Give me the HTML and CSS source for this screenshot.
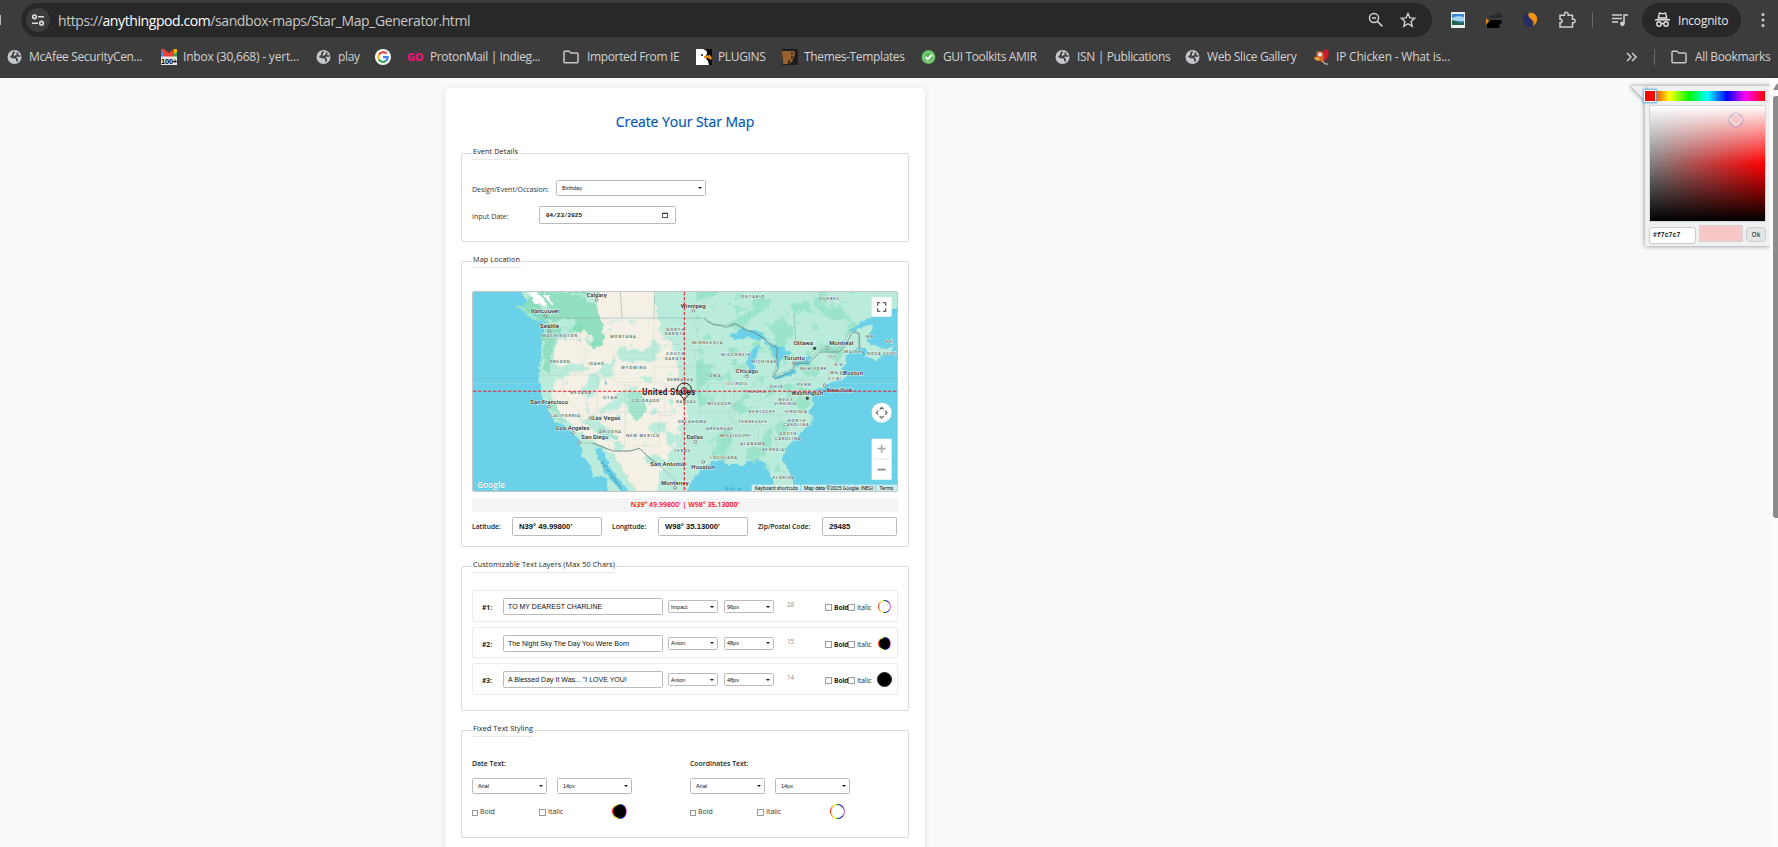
FILE: index.html
```html
<!DOCTYPE html>
<html lang="en">
<head>
<meta charset="utf-8">
<title>Create Your Star Map</title>
<link rel="stylesheet" href="styles.css">
</head>
<body>
<svg class="defs" width="0" height="0">
  <defs>
    <symbol id="globe" viewBox="0 0 16 16"><circle cx="7.500" cy="8" r="7" fill="#c3c6ca"/><path d="M7.500 2.500 6 4.500v2L3.500 8M5 8.500h3.500L10 10v2.500M10.500 3.500v2.500L9 7h4.500" fill="none" stroke="#3c3c3c" stroke-width="1.700"/></symbol>
    <symbol id="folder" viewBox="0 0 16 16"><path d="M1 3.200c0-.5.3-.9.900-.9h4.200L7.800 4h6.300c.5 0 .9.400.9.900v7.900c0 .5-.4.900-.9.900H1.900c-.5 0-.9-.4-.9-.9z" fill="none" stroke="#c7c7c7" stroke-width="1.500"/></symbol>
  </defs>
</svg>
<header class="chrome">
  <div class="toolbar">
    <span class="edge"></span>
    <div class="address">
      <span class="site"><svg width="14" height="14" viewBox="0 0 14 14" fill="none" stroke="#dedede" stroke-width="1.600"><circle cx="3.500" cy="3.800" r="1.800"/><path d="M7 3.800h6M1 10.200h6"/><circle cx="10.500" cy="10.200" r="1.800"/></svg></span>
      <span class="url">https://<b>anythingpod.com</b>/sandbox-maps/Star_Map_Generator.html</span>
      <svg class="lens" width="16" height="16" viewBox="0 0 16 16" fill="none" stroke="#cfcfcf" stroke-width="1.500"><circle cx="6" cy="6" r="4.500"/><path d="M4 6h4M9.400 9.400l5 5" /></svg>
      <svg class="star" width="16" height="16" viewBox="0 0 16 16" fill="none" stroke="#cfcfcf" stroke-width="1.400"><path d="m8 1.500 1.900 4.400 4.800.4-3.600 3.200 1.100 4.700L8 11.700l-4.200 2.500 1.100-4.700L1.300 6.300l4.800-.4z"/></svg>
    </div>
    <svg width="16" height="16" viewBox="0 0 16 16"><rect x="1" width="14" height="16" fill="#e8eef2"/><rect x="2" y="2" width="12" height="11" fill="#3a86d4"/><path d="M2 6c3-2 8-2 12-1v4H2z" fill="#a9d6ef"/><path d="M2 8l4 1 4 2 4-1v3H2z" fill="#1f6550"/></svg>
    <svg width="18" height="16" viewBox="0 0 18 16"><path d="M5 3q3 2 6-1t6 1v3H5z" fill="#2a2a2a"/><path d="M1 6l3 3-3 4z" fill="#e58b1a"/><path d="M6 8h10l1 3-2 1-1 4H2v-4z" fill="#000"/></svg>
    <svg width="16" height="16" viewBox="0 0 16 16"><path d="M6 1C1 2 0 7 2 11s7 5 9 3c-3-3 0-4-2-7S5 4 6 1z" fill="#222c62"/><path d="M7 1c5-1 9 3 8 7-.5 3-2 5-4 6 1-3 1-4-1-6S5 4 7 1z" fill="#f39313"/></svg>
    <svg width="18" height="18" viewBox="0 0 18 18"><path d="M2 4.300h4.500V3a1.800 1.800 0 0 1 3.600 0v1.300h4.400v4h1a1.700 1.700 0 0 1 0 3.400h-1V16H2v-4.200c2.800 0 2.800-3.600 0-3.600z" fill="none" stroke="#cfcfcf" stroke-width="1.500"/></svg>
    <i class="bar"></i>
    <svg width="16" height="14" viewBox="0 0 16 14" fill="none" stroke="#cfcfcf" stroke-width="1.600"><path d="M0 2h10M0 5.500h10M0 9h6M12 11V2h4"/><circle cx="10.400" cy="10.800" r="1.500" fill="#cfcfcf"/></svg>
    <div class="incognito"><svg width="15" height="16" viewBox="0 0 15 16"><path d="M4.500 1 7.500 1.800 10.500 1l1.300 5H3.200z" fill="none" stroke="#e3e3e3" stroke-width="1.300"/><path d="M0 7.800h15" stroke="#e3e3e3" stroke-width="1.500"/><g fill="none" stroke="#e3e3e3" stroke-width="1.400"><circle cx="4" cy="12" r="2.200"/><circle cx="11" cy="12" r="2.200"/><path d="M6.200 11.500h2.600"/></g></svg><span>Incognito</span></div>
    <svg class="dots" width="4" height="16" viewBox="0 0 4 16" fill="#cfcfcf"><circle cx="2" cy="2.500" r="1.500"/><circle cx="2" cy="8" r="1.500"/><circle cx="2" cy="13.500" r="1.500"/></svg>
  </div>
  <nav class="bookmarks">
    <a><svg><use href="#globe"/></svg>McAfee SecurityCen...</a>
    <a class="mail"><svg viewBox="0 0 16 16"><path d="M0 0h3l5 4 5-4h3v8H0z" fill="#ea4335"/><path d="M0 1v7h3V4z" fill="#4285f4"/><path d="M13 0h3v4l-3 2z" fill="#fbbc04"/><path d="M13 5l3-2v5h-3z" fill="#34a853"/><rect y="7.500" width="16" height="8.500" fill="#e6e6e6"/><text x="0" y="14.600" font-size="8" textLength="16" font-family="Liberation Sans" font-weight="bold" lengthAdjust="spacingAndGlyphs">100+</text></svg>Inbox (30,668) - yert...</a>
    <a><svg><use href="#globe"/></svg>play</a>
    <a><svg viewBox="0 0 16 16"><circle cx="8" cy="8" r="8" fill="#fff"/><g fill="none" stroke-width="2.200"><path d="M11.500 4.700A4.700 4.700 0 0 0 3.900 5.700" stroke="#ea4335"/><path d="M3.900 5.700a4.700 4.700 0 0 0 0 4.700" stroke="#fbbc05"/><path d="M3.900 10.400a4.700 4.700 0 0 0 7 1.400" stroke="#34a853"/><path d="M10.900 11.800A4.700 4.700 0 0 0 12.700 8.100H8" stroke="#4285f4"/></g></svg></a>
    <a class="indie"><span>GO</span>ProtonMail | Indieg...</a>
    <a class="fold"><svg><use href="#folder"/></svg>Imported From IE</a>
    <a><svg viewBox="0 0 16 16"><rect width="16" height="16" fill="#080808"/><path d="M0 0h7c4 1 4 3 4 5l-2 3 3 4 1 4H0z" fill="#fff"/><path d="M8 7l6-1 2 3-1 2-3-2H8z" fill="#e78b19"/><circle cx="6" cy="6" r="1" fill="#111"/></svg>PLUGINS</a>
    <a><svg viewBox="0 0 16 16"><rect width="16" height="16" fill="#1d1d1d"/><path d="M0 2h12l1 3-3 8-5 2H1z" fill="#996331"/><path d="M10 3v3M10 7v3M8 11l-2 3" stroke="#3d2410" stroke-width="1.500"/></svg>Themes-Templates</a>
    <a><svg viewBox="0 0 16 16"><circle cx="7.500" cy="8" r="7" fill="#5cb85c"/><circle cx="7.500" cy="8" r="5" fill="none" stroke="#a4dba0"/><path d="M4.500 8l2.300 2.300L11 5.800" fill="none" stroke="#fff" stroke-width="2"/></svg>GUI Toolkits AMIR</a>
    <a><svg><use href="#globe"/></svg>ISN | Publications</a>
    <a><svg><use href="#globe"/></svg>Web Slice Gallery</a>
    <a class="mail"><svg viewBox="0 0 16 16"><path d="M10 1l3-1 2 3-1 6-3 3-3-5z" fill="#c61a2b"/><path d="M3 2l6 1 1 6-1 5-4-3-3-3z" fill="#d9662c"/><circle cx="6" cy="5.500" r="2" fill="#dfe8ee"/><path d="M0 8l6 1-1 3-4-1z" fill="#f1a33b"/><path d="M9 12l2 3h3" stroke="#ddd" fill="none"/></svg>IP Chicken - What is...</a>
    <a class="more"><svg viewBox="0 0 16 16"><path d="M1 4l4 4-4 4M6 4l4 4-4 4" fill="none" stroke="#cfcfcf" stroke-width="1.500"/></svg></a>
    <i class="bar"></i>
    <a class="fold"><svg><use href="#folder"/></svg>All Bookmarks</a>
  </nav>
</header>

<main class="page">
  <form class="card">
    <h1>Create Your Star Map</h1>

    <fieldset class="event">
      <legend>Event Details</legend>
      <div class="line"><label class="t-occasion">Design/Event/Occasion:</label><div class="select">Birthday</div></div>
      <div class="line"><label class="t-date">Input Date:</label><div class="date"><span>04/23/2025</span><svg width="6" height="6" viewBox="0 0 6 6"><path d="M.5 1.200h5v4.300h-5zM.5 1.500h5" fill="none" stroke="#222" stroke-width=".8"/></svg></div></div>
    </fieldset>

    <fieldset class="location">
      <legend>Map Location</legend>
      <div class="map">
      <svg width="424" height="199" viewBox="40 37 1272 597">
        <defs>
          <filter id="rough" x="0" y="0" width="100%" height="100%"><feTurbulence type="fractalNoise" baseFrequency=".05" numOctaves="3" seed="4"/><feDisplacementMap in="SourceGraphic" scale="22" xChannelSelector="R" yChannelSelector="G"/></filter>
          <filter id="patch" x="0" y="0" width="100%" height="100%"><feTurbulence type="fractalNoise" baseFrequency=".016" numOctaves="5" seed="11"/><feColorMatrix values="0 0 0 0 0  0 0 0 0 0  0 0 0 0 0  12 0 0 0 -6.400" result="n"/><feComposite in="SourceGraphic" in2="n" operator="in"/></filter>
        </defs>
        <rect x="0" y="0" width="1400" height="700" fill="#6bd1e8"/>
        <g filter="url(#rough)">
          <path fill="#baebdb" d="M180 20L205 70 225 90 245 118 255 150 250 190 240 250 238 300 247 330 246 355 264 380 272 402 286 427 312 440 334 456 350 470 360 492 370 522 380 542 396 562 402 592 432 590 446 602 440 620 458 650H484L470 620 442 590 426 562 414 536 402 515 412 504 430 512 448 560 472 592 496 620 505 650H680L692 612 705 592 722 575 760 545 785 545 810 555 850 555 862 542 905 540 922 560 938 590 948 650H985L1002 640 1000 612 985 570 970 540 980 505 1005 482 1032 452 1062 430 1050 400 1062 370 1052 346 1090 320 1115 310 1150 296 1162 282 1150 262 1160 232 1190 205 1215 205 1222 225 1250 245 1262 230 1312 200 1290 200 1262 205 1240 195 1220 175 1238 150 1240 128 1262 135 1312 90 1340 20Z"/>
          <path fill="#9ee4cb" d="M168 72l26 14 36 18 12 24-28-10-32-24z"/>
          <path fill="#f5f0e5" d="M400 20H585L590 110 640 200 665 310 685 400 665 450 650 520 600 570 590 650H540L500 590 460 520 400 480 350 450 300 400 275 345 300 280 285 240 290 180 350 165 360 130 420 110Z"/>
        </g>
        <g filter="url(#patch)">
          <path fill="#9be4c9" d="M710 37h560l-100 120-20 70-60 90-40 60-90 100v100l-200-40-50-200z"/>
          <path fill="#baebdb" d="M290 120h350l40 290-30 170-120-40-150-70-90-150z"/>
          <path fill="#89dfbb" d="M180 37h240l20 180-70-20-60-60-50 150-30-100z"/>
        </g>
        <g filter="url(#rough)">
          <path fill="#92e0c0" d="M250 40h100l60 40 20 60-5 55-45-40-40-40-60 10-20-40zM262 120l25 20-5 60-15 80-18-10z"/>
          <path fill="#fff" d="M202 38l34-2 28 45-40-14zM250 45l20 5 6 30z"/>
          <path fill="#a2e4cc" d="M510 330l40 10 10 50-30 40-30-50zM420 440l60 30-10 10-60-20zM270 350l20 30 30 50-15 4-30-50z"/>
          <path fill="#6bd1e8" d="M808 170L845 148 905 155 925 178 900 184 865 170 828 180ZM866 226L880 204 903 194 893 220 884 250 884 280 866 288 862 254ZM912 188L952 196 992 216 985 238 970 226 957 268 942 230 932 204ZM940 290L1008 268 1004 284 952 300ZM1003 250L1052 234 1044 252 1010 256ZM250 108l14 25-12 2zM430 298l12 8-4 10zM1160 164L1200 128 1260 100 1330 75V200L1285 165 1240 130 1190 150Z"/>
        </g>
        <path d="M37 311H238M1125 311H1312" stroke="#a9e6f2" stroke-width="1"/>
        <g fill="none" stroke="#7fa8a0" stroke-width="1.500">
          <path d="M257 115H735l8 10 40 14 45-8 85 44 40 28-4 60-12 28 60-22 6-24h40l34-34h58l40-60 20 5 2 50 14 12M358 488l42 4 60 22h50l30-8 30 30 30 20 30 32 35 28 25 20"/>
          <path d="M482 37l5 78M585 37l-2 78M1003 100l5 80"/>
        </g>
        <g fill="none" stroke="#9fb3aa" stroke-width="1.500" stroke-dasharray="2 3">
          <path d="M362 115v70l20 30-20 70M583 115v190M463 215v90M463 217h120M240 287h225M310 287v50l90 110M413 287v120M496 308v195M463 308h150M400 398h240M583 195h80M583 262h85M616 310v88M600 398v100h-80M600 408h40M700 115l20 80v200M660 260h115M720 310h72M792 320v60l40 60M715 395h110M760 470v60M825 320v80l-40 100M905 290v80M960 300v70M870 405h140M870 405l-60 50v85M897 450v95M930 445l30 65M1000 300h90M1040 330l-60 70M1105 220v70M1130 215v50M1160 190v60M700 180l10 80M250 180l70-5 42 10"/>
        </g>
        <path fill="none" stroke="#5d7a76" stroke-width="2" d="M735 115l8 10 18 10 22 2 16 6 29-10 30 18 22 6 33 20 12 14 28 14-2 28 4 32-14 28 6 4 54-22 6-24h40l34-34h58l20-24 20-36 20 5 2 50 14 12M400 490l60 24h50l30-8 30 30 30 20"/>
        <g class="state">
          <text x="248" y="172" textLength="104">WASHINGTON</text><text x="452" y="174" textLength="76">MONTANA</text><text x="270" y="250" textLength="60">OREGON</text><text x="386" y="256" textLength="46">IDAHO</text><text x="485" y="268" textLength="74">WYOMING</text><text x="620" y="154" textLength="54">NORTH</text><text x="616" y="167" textLength="60">DAKOTA</text><text x="620" y="227" textLength="54">SOUTH</text><text x="616" y="241" textLength="60">DAKOTA</text><text x="622" y="303" textLength="78">NEBRASKA</text><text x="332" y="342" textLength="62">NEVADA</text><text x="431" y="357" textLength="41">UTAH</text><text x="517" y="366" textLength="81">COLORADO</text><text x="650" y="370" textLength="58">KANSAS</text><text x="271" y="413" textLength="90">CALIFORNIA</text><text x="418" y="459" textLength="66">ARIZONA</text><text x="500" y="471" textLength="98">NEW MEXICO</text><text x="655" y="430" textLength="84">OKLAHOMA</text><text x="643" y="516" textLength="48">TEXAS</text>
          <text x="845" y="54" textLength="69">ONTARIO</text><text x="1079" y="60" textLength="60">QUEBEC</text><text x="698" y="192" textLength="90">MINNESOTA</text><text x="784" y="228" textLength="88">WISCONSIN</text><text x="875" y="250" textLength="76">MICHIGAN</text><text x="742" y="292" textLength="40">IOWA</text><text x="800" y="315" textLength="62">ILLINOIS</text><text x="858" y="340" textLength="60">INDIANA</text><text x="931" y="324" textLength="37">OHIO</text><text x="1013" y="318" textLength="40">PENN</text><text x="1022" y="271" textLength="78">NEW YORK</text><text x="1108" y="235" textLength="20">VT</text><text x="1124" y="260" textLength="24">NH</text><text x="1112" y="282" textLength="22">MA</text><text x="1106" y="301" textLength="38">CT RI</text><text x="1154" y="220" textLength="50">MAINE</text><text x="1220" y="174" textLength="20">NB</text><text x="1280" y="191" textLength="18">PE</text><text x="1223" y="227" textLength="86">NOVA SCOT</text><text x="744" y="375" textLength="73">MISSOURI</text><text x="868" y="399" textLength="78">KENTUCKY</text><text x="956" y="363" textLength="42">WEST</text><text x="944" y="377" textLength="65">VIRGINIA</text><text x="975" y="399" textLength="67">VIRGINIA</text><text x="836" y="430" textLength="85">TENNESSEE</text><text x="740" y="451" textLength="80">ARKANSAS</text><text x="782" y="472" textLength="92">MISSISSIPPI</text><text x="984" y="426" textLength="53">NORTH</text><text x="971" y="440" textLength="76">CAROLINA</text><text x="960" y="466" textLength="50">SOUTH</text><text x="946" y="480" textLength="76">CAROLINA</text><text x="842" y="495" textLength="74">ALABAMA</text><text x="907" y="514" textLength="66">GEORGIA</text><text x="752" y="538" textLength="80">LOUISIANA</text><text x="940" y="597" textLength="63">FLORIDA</text>
        </g>
        <g class="water"><text x="797" y="630" textLength="50">Gulf of</text><text transform="translate(422 548) rotate(54)" textLength="100">Gulf of California</text></g>
        <g class="city">
          <text x="381" y="52" textLength="60">Calgary</text><text x="213" y="100" textLength="86">Vancouver</text><text x="241" y="144" textLength="57">Seattle</text><text x="212" y="372" textLength="113">San Francisco</text><text x="398" y="421" textLength="84">Las Vegas</text><text x="290" y="450" textLength="100">Los Angeles</text><text x="365" y="478" textLength="81">San Diego</text><text x="572" y="558" textLength="102">San Antonio</text><text x="605" y="615" textLength="82">Monterrey</text><text x="663" y="84" textLength="75">Winnipeg</text><text x="1002" y="196" textLength="58">Ottawa</text><text x="1109" y="195" textLength="72">Montreal</text><text x="972" y="240" textLength="64">Toronto</text><text x="829" y="280" textLength="66">Chicago</text><text x="1151" y="285" textLength="59">Boston</text><text x="1101" y="337" textLength="77">New York</text><text x="995" y="346" textLength="95">Washington</text><text x="681" y="477" textLength="49">Dallas</text><text x="695" y="567" textLength="70">Houston</text>
        </g>
        <g fill="#fff" stroke="#555" stroke-width="2"><circle cx="411" cy="61" r="4"/><circle cx="257" cy="109" r="4"/><circle cx="269" cy="154" r="4"/><circle cx="268" cy="381" r="4"/><circle cx="392" cy="415" r="4"/><circle cx="341" cy="459" r="4"/><circle cx="359" cy="488" r="4"/><circle cx="675" cy="553" r="4"/><circle cx="646" cy="624" r="4"/><circle cx="701" cy="93" r="4"/><circle cx="1103" cy="204" r="4"/><circle cx="1003" cy="250" r="4"/><circle cx="862" cy="290" r="4"/><circle cx="1146" cy="280" r="4"/><circle cx="1095" cy="317" r="4"/><circle cx="707" cy="486" r="4"/><circle cx="731" cy="547" r="4"/><g fill="#333"><circle cx="1065" cy="206" r="4"/><circle cx="1043" cy="356" r="4"/></g></g>
        <text class="country" x="547" y="346" textLength="160">United States</text>
        <path d="M40 335H1312M674 37V634" stroke="#e8222e" stroke-width="3.200" stroke-dasharray="10 5" fill="none"/>
        <g fill="none" stroke="#2a2020" stroke-width="3"><path d="M674 362C668 348 653 343 653 329a21 19 0 0 1 42 0C695 343 680 348 674 362z"/><circle cx="674" cy="333" r="9"/></g>
        <text x="53" y="624" textLength="83" lengthAdjust="spacingAndGlyphs" font-family="Open Sans" font-weight="600" font-size="28" fill="#fff" stroke="#5a8f9c" stroke-width="1" paint-order="stroke">Google</text>
        <g fill="#e1f3f2" fill-opacity=".85"><rect x="876" y="615" width="146" height="20"/><rect x="1025" y="615" width="222" height="20"/><rect x="1250" y="615" width="62" height="20"/></g>
        <g font-family="Roboto" font-size="16" fill="#111" ><text x="885" y="630" textLength="130" lengthAdjust="spacingAndGlyphs">Keyboard shortcuts</text><text x="1033" y="630" textLength="208" lengthAdjust="spacingAndGlyphs">Map data ©2025 Google, INEGI</text><text x="1259" y="630" textLength="42" lengthAdjust="spacingAndGlyphs">Terms</text></g>
        <g fill="#fff"><rect x="1236" y="52" width="60" height="59" rx="3"/><circle cx="1266" cy="399" r="30"/><rect x="1236" y="477" width="60" height="123" rx="3"/></g>
        <g fill="none" stroke="#666" stroke-width="4"><path d="M1254 78v-9h8M1270 69h8v9M1278 86v9h-8M1262 95h-8v-9"/><path d="M1260 389l6-6 6 6M1260 409l6 6 6-6M1256 393l-6 6 6 6M1276 393l6 6-6 6" stroke-width="3.500"/><path d="M1254 507h24M1266 495v24" stroke="#aaa" stroke-width="5"/><path d="M1254 570h24" stroke="#888" stroke-width="5"/></g><path d="M1243 538h46" stroke="#ddd" stroke-width="2.500"/>
      </svg>
      </div>
      <div class="readout">N39° 49.99800' | W98° 35.13000'</div>
      <div class="coords">
        <label>Latitude:</label><div class="field">N39° 49.99800'</div>
        <label>Longitude:</label><div class="field">W98° 35.13000'</div>
        <label>Zip/Postal Code:</label><div class="field">29485</div>
      </div>
    </fieldset>

    <fieldset class="layers">
      <legend>Customizable Text Layers (Max 50 Chars)</legend>
      <div class="layer"><b>#1:</b><div class="field">TO MY DEAREST CHARLINE</div><div class="select">Impact</div><div class="select">96px</div><span class="count">28</span><i class="check"></i><span class="bold">Bold</span><i class="check"></i><span class="ital">Italic</span><i class="ring"></i></div>
      <div class="layer second"><b>#2:</b><div class="field">The Night Sky The Day You Were Born</div><div class="select">Anton</div><div class="select">48px</div><span class="count">15</span><i class="check"></i><span class="bold">Bold</span><i class="check"></i><span class="ital">Italic</span><i class="ring dark"></i></div>
      <div class="layer"><b>#3:</b><div class="field">A Blessed Day It Was... "I LOVE YOU!</div><div class="select">Anton</div><div class="select">48px</div><span class="count">14</span><i class="check"></i><span class="bold">Bold</span><i class="check"></i><span class="ital">Italic</span><i class="ring full"></i></div>
    </fieldset>

    <fieldset class="fixed">
      <legend>Fixed Text Styling</legend>
      <div class="columns">
        <section><h2>Date Text:</h2><div class="pair"><div class="select">Arial</div><div class="select">14px</div></div><div class="opts"><i class="check"></i><span>Bold</span><i class="check"></i><span>Italic</span><i class="ring big dark"></i></div></section>
        <section><h2>Coordinates Text:</h2><div class="pair"><div class="select">Arial</div><div class="select">14px</div></div><div class="opts"><i class="check"></i><span>Bold</span><i class="check"></i><span>Italic</span><i class="ring big"></i></div></section>
      </div>
    </fieldset>
  </form>

  <aside class="picker">
    <svg class="tail" width="15" height="17" viewBox="0 0 15 17"><path d="M0 0h15v15z" fill="#f0f0f0"/><path d="M0 0l15 15" stroke="#bbb"/></svg>
    <div class="hue"><i></i></div>
    <div class="shade"><i></i></div>
    <div class="foot"><span class="hex">#f7c7c7</span><span class="swatch"></span><span class="ok">Ok</span></div>
  </aside>
  <div class="scroll"><svg width="5" height="12" viewBox="0 0 5 12"><path d="M5 0v7H0L3 2z" fill="#8b8b8b"/></svg><i></i></div>
</main>
</body>
</html>
```
FILE: styles.css
```css
* { box-sizing: border-box; }
body { margin: 0; width: 1778px; height: 847px; overflow: hidden; background: #f8f9fb; font-family: "Open Sans", sans-serif; color: #333; }
i { font-style: normal; display: block; }
svg { display: block; flex: none; }
.defs { position: absolute; }

/* browser bars */
.chrome { height: 78px; background: #3c3c3c; border-bottom: 1px solid #363636; color: #d2d2d2; }
.toolbar { height: 37px; padding-top: 3px; display: grid; grid-template-columns: 21px 1429px 35px 37px 36px 34px 20px 30px 100px 37px; align-items: center; }
.edge { width: 1px; height: 10px; background: #bbb; }
.address { width: 1411px; height: 34px; border-radius: 17px; background: #282828; display: flex; align-items: center; padding-left: 5px; }
.site { width: 24px; height: 24px; border-radius: 50%; background: #3c3c3c; display: grid; place-items: center; }
.url { margin-left: 8px; width: 1310px; font-size: 14px; letter-spacing: -.41px; color: #c7c7c7; white-space: nowrap; }
.url b { font-weight: 400; color: #fff; }
.star { margin-left: 16px; }
.bar { width: 1px; height: 16px; background: #6a6a6a; }
.incognito { width: 99px; height: 34px; border-radius: 17px; background: #282828; display: flex; align-items: center; gap: 8px; padding-left: 13px; font-size: 12px; letter-spacing: -.2px; color: #e8e8e8; }
.dots { margin-left: 19px; }
.bookmarks { height: 40px; padding-left: 7px; display: grid; grid-template-columns: 154px 155px 59px 32px 156px 133px 86px 139px 134px 130px 129px 312px 28px 17px 108px; align-items: center; }
.bookmarks a { display: flex; align-items: center; gap: 6px; font-size: 12px; line-height: 16px; letter-spacing: -.36px; white-space: nowrap; }
.bookmarks a svg { width: 16px; height: 16px; }
.bookmarks .fold { gap: 8px; }
.bookmarks .mail { letter-spacing: -.2px; }
.bookmarks .indie { letter-spacing: -.38px; }
.indie span { width: 17px; font-size: 11px; font-weight: 800; letter-spacing: -.4px; color: #eb1478; }

/* form card */
.page { position: relative; height: 769px; padding: 10px 0 0 445px; overflow: hidden; }
.card { width: 480px; height: 800px; padding: 0 16px; background: #fff; border-radius: 5px; box-shadow: 0 0 6px rgba(0,0,0,.09); }
h1 { margin: 0; height: 59px; padding-top: 23px; line-height: 22px; font-size: 14px; font-weight: 500; text-align: center; color: #0056b3; letter-spacing: -.05px; -webkit-text-stroke: .2px #0056b3; }
fieldset { width: 448px; min-width: 0; margin: 0 0 13px; padding: 0 10px; border: 1px solid #dcdcdc; border-radius: 2px; font-size: 7px; }
legend { height: 13px; padding: 0 1px 3px 1px; line-height: 9px; border-bottom: 1px solid #e8e8e8; font-weight: 500; font-size: 7.300px; letter-spacing: .08px; color: #222; white-space: nowrap; }
.select { display: flex; align-items: center; justify-content: space-between; height: 16px; padding: 0 3px 0 5px; border: 1px solid #bbb; border-radius: 1.500px; background: #fff; color: #111; font: 5.500px/8px "Liberation Sans", sans-serif; }
.select::after { content: ""; border: 2px solid transparent; border-top: 2px solid #111; border-bottom: 0; }
.field { display: flex; align-items: center; border: 1px solid #bbb; border-radius: 1.500px; color: #111; font-family: "Liberation Sans", sans-serif; white-space: nowrap; }
.check { width: 7px; height: 7px; border: 1px solid #999; background: #fff; }
.ring { width: 13px; height: 13px; border-radius: 50%; border: 1px solid transparent; background: linear-gradient(#fff,#fff) padding-box, linear-gradient(to right, red, orange, yellow, green, blue, indigo, violet) border-box; }
.ring.dark { background: linear-gradient(#000,#000) padding-box, linear-gradient(to right, red, orange, yellow, green, blue, indigo, violet) border-box; }
.ring.big { width: 15px; height: 15px; }
.ring.full { width: 15px; height: 15px; background: #000; border-color: #222; }

.event { height: 95px; }
.line { display: flex; align-items: center; height: 16px; margin-top: 10px; white-space: nowrap; }
.event legend + .line { margin-top: 20px; }
.line label { padding-top: 3px; }
.t-occasion { width: 84px; font-size: 7px; }
.t-date { width: 67px; font-size: 7px; }
.line .t-date { padding-top: 5px; }
.line .select { width: 150px; }
.date { width: 137px; height: 18px; margin-top: 2px; padding: 0 7px 0 6px; display: flex; align-items: center; justify-content: space-between; border: 1px solid #bbb; border-radius: 1.500px; font: bold 6px "Liberation Mono", monospace; color: #111; }

.location { height: 292px; }
.map { margin-top: 23px; width: 426px; height: 201px; border: 1px solid #c5c5c5; border-radius: 2px; overflow: hidden; }
.state { font: 500 12px Roboto, sans-serif; fill: #50605d; stroke: #e8f6f0; stroke-width: 2.500px; paint-order: stroke; }
.city { font: 500 18px Roboto, sans-serif; fill: #222; stroke: #eef8f4; stroke-width: 2.500px; paint-order: stroke; }
.country { font: 700 25px Roboto, sans-serif; fill: #222; stroke: #f5f0e5; stroke-width: 2px; paint-order: stroke; }
.water { font: 13px Roboto, sans-serif; fill: #2d8ba5; }
.readout { margin-top: 6px; height: 14px; background: #f4f4f4; border-radius: 2px; text-align: center; font-weight: 600; font-size: 7px; line-height: 13px; color: #f00; }
.coords { margin-top: 5px; height: 19px; display: grid; grid-template-columns: 40px 90px 56px 90px 74px 75px; align-items: center; font-size: 6.700px; font-weight: 600; color: #222; white-space: nowrap; }
.coords label:not(:first-child) { padding-left: 10px; }
.coords .field { height: 19px; padding-left: 6px; font-weight: 700; font-size: 7.700px; }

.layers { height: 151px; }
.layer { width: 426px; height: 32px; margin-bottom: 5px; padding-top: 1px; border: 1px solid #ececec; border-radius: 2px; display: grid; grid-template-columns: 30px 165px 56px 62px 39px 9px 14px 9px 19px 16px; align-items: center; font-size: 6.700px; color: #222; white-space: nowrap; }
.layers legend + .layer { margin-top: 17px; }
.layer.second { height: 31px; }
.layer b { padding: 2px 0 0 9px; }
.layer .field { width: 160px; height: 17px; padding-left: 4px; font-size: 7px; }
.layer .select { width: 50px; height: 13px; padding-left: 2px; }
.count { padding-left: 1px; margin-top: -4px; color: #888; font-size: 6.200px; }
.layer .check { margin-top: 2px; width: 7px; height: 7px; }
.bold { font-weight: 700; margin-top: 2px; letter-spacing: -.1px; }
.ital { margin-top: 2px; }
.layer .ring { justify-self: center; }

.fixed { height: 114px; }
.columns { display: grid; grid-template-columns: 218px 208px; padding-top: 22px; }
h2 { margin: 0; height: 19px; font-size: 6.900px; line-height: 9px; font-weight: 600; color: #222; }
.pair { display: flex; gap: 10px; }
.pair .select { width: 75px; }
.opts { margin-top: 10px; height: 15px; display: grid; grid-template-columns: 8px 59px 9px 64px 15px; align-items: center; font-size: 7px; }
.opts .check { width: 6px; height: 6px; margin-top: 2px; }
.opts .check:nth-of-type(2) { width: 7px; height: 7px; }

/* colour popover */
.picker { position: absolute; left: 1645px; top: 8px; width: 125px; height: 160px; background: #f0f0f0; box-shadow: 0 0 5px rgba(0,0,0,.45); padding: 5px 5px 0; }
.tail { position: absolute; left: -15px; top: 0; filter: drop-shadow(0 0 2px rgba(0,0,0,.4)); }
.hue { height: 10px; background: linear-gradient(to right, #f00, #ff0 17%, #0f0 34%, #0ff 50%, #00f 67%, #f0f 83%, #f00); }
.hue i { position: relative; left: -6px; top: -1px; width: 12px; height: 12px; background: #f00; border: 1px solid #fff; box-shadow: 0 0 2px 1px #58a9e8; }
.shade { position: relative; margin-top: 5px; height: 115px; background: linear-gradient(to bottom, #fff, rgba(255,255,255,0) 50%, rgba(0,0,0,0) 50%, #000), linear-gradient(to right, #808080, #f00); outline: 1px solid #d5d5d5; }
.shade i { position: absolute; left: 80px; top: 8px; width: 12px; height: 12px; border: 1.500px solid #fff; border-radius: 50%; background: #f7c7c7; box-shadow: 0 0 2px #339; }
.foot { display: grid; grid-template-columns: 50px 47px 20px; margin: 4px 0 0 -1px; height: 19px; align-items: end; }
.hex { width: 47px; height: 17px; border: 1px solid #ccc; border-radius: 3px; background: #fff; padding-left: 3px; font: bold 6.500px/15px "Liberation Mono", monospace; color: #111; }
.swatch { width: 44px; height: 17px; margin-bottom: 2px; background: #f7c7c7; border: 1px solid #d5d5d5; }
.ok { width: 20px; height: 15px; margin-bottom: 2px; border: 1px solid #ccc; border-radius: 4px; background: #e6e6e6; text-align: center; font-size: 6.500px; line-height: 13px; font-weight: 600; color: #444; }
.scroll { position: absolute; right: 0; top: 0; width: 8px; height: 769px; background: #fcfcfc; padding: 5px 0 0 3px; }
.scroll i { width: 5px; height: 422px; margin-top: 1px; background: #8b8b8b; border-radius: 3px 0 0 3px; }
```
